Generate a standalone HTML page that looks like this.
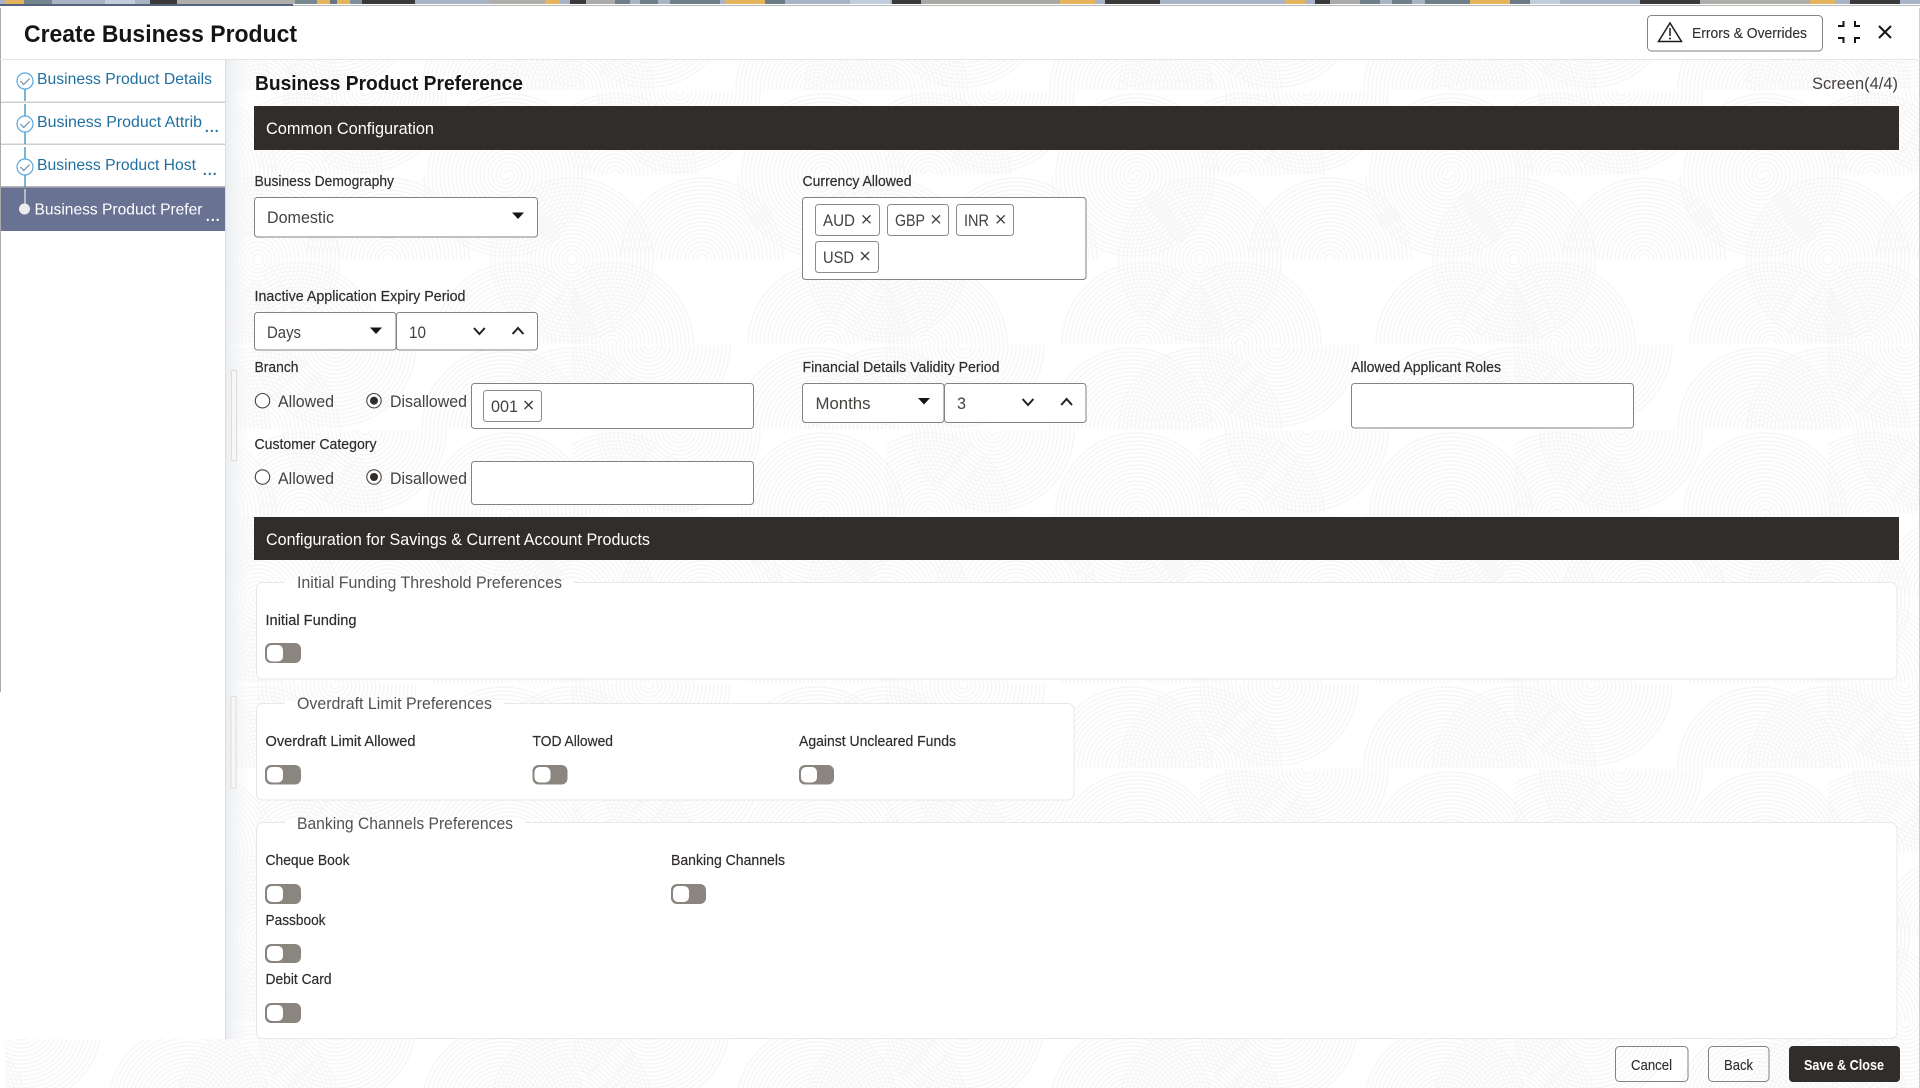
<!DOCTYPE html>
<html lang="en">
<head>
<meta charset="utf-8">
<title>Create Business Product</title>
<style>
html,body{margin:0;padding:0;background:#fff;width:1920px;height:1088px;overflow:hidden}
svg{display:block}
text{font-family:"Liberation Sans",sans-serif;white-space:pre}
.l{font-size:14.5px;fill:#2f2c2a;stroke:#2f2c2a;stroke-width:.18px}
.v{font-size:17px;fill:#45413e}
.c{font-size:16.5px;fill:#45413e}
.g{font-size:16.5px;fill:#55514e}
.s{font-size:16px;fill:#1f6f9f}
.b{font-size:15px;fill:#312d2a;stroke:#312d2a;stroke-width:.12px}
.h{font-size:17px;fill:#fff}
.box{fill:#fff;stroke:#85817d;stroke-width:1}
.chip{fill:#fff;stroke:#8f8b87;stroke-width:1}
.x{stroke:#3b3835;stroke-width:1.3;fill:none}
.chev{stroke:#222;stroke-width:2;fill:none}
.tg{fill:#8b8580}
.kn{fill:#fff}
.fs{fill:#fff;stroke:#e8e8e8;stroke-width:1}
.ck{fill:#fff;stroke:#5aa7dc;stroke-width:1.2}
.tk{fill:none;stroke:#6a93b0;stroke-width:1.2}
.ln{stroke:#1f86c1;stroke-width:1.2}
.dot{fill:#1f6f9f}
</style>
</head>
<body>
<svg xmlns="http://www.w3.org/2000/svg" width="1920" height="1088" viewBox="0 0 1920 1088">
<defs>
<g id="r" fill="none" stroke="#f6f6f6" stroke-width="1.5">
<circle r="5"/><circle r="9"/><circle r="13"/><circle r="17"/><circle r="21"/><circle r="25"/><circle r="29"/><circle r="33"/><circle r="37"/><circle r="41"/><circle r="45"/><circle r="49"/><circle r="53"/><circle r="57"/><circle r="61"/><circle r="65"/><circle r="69"/><circle r="73"/><circle r="77"/><circle r="81"/>
</g>
<pattern id="bg" width="314" height="339" patternUnits="userSpaceOnUse" patternTransform="translate(258 175)">
<svg x="0" y="0" width="314" height="84">
<use href="#r" x="0" y="84"/><use href="#r" x="314" y="84"/><use href="#r" x="130" y="84"/><use href="#r" x="247" y="0"/><use href="#r" x="-67" y="0"/>
</svg>
<svg x="0" y="85" width="314" height="84">
<use href="#r" x="40" y="84"/><use href="#r" x="257" y="84"/><use href="#r" x="-57" y="84"/><use href="#r" x="0" y="0"/><use href="#r" x="314" y="0"/>
</svg>
<svg x="0" y="170" width="314" height="84">
<use href="#r" x="0" y="84"/><use href="#r" x="314" y="84"/><use href="#r" x="245" y="84"/><use href="#r" x="-69" y="84"/><use href="#r" x="77" y="0"/>
</svg>
<svg x="0" y="255" width="314" height="84">
<use href="#r" x="251" y="84"/><use href="#r" x="-63" y="84"/><use href="#r" x="43" y="84"/><use href="#r" x="107" y="0"/>
</svg>
</pattern>
<linearGradient id="sh" x1="0" x2="1" y1="0" y2="0"><stop offset="0" stop-color="#e9ecef" stop-opacity=".9"/><stop offset="1" stop-color="#fff" stop-opacity="0"/></linearGradient>
</defs>

<!-- top strip -->
<rect x="0" y="0" width="1920" height="5" fill="#a8b4c6"/>
<g>
<rect x="5" y="0" width="19" height="4" fill="#e5b45c"/><rect x="24" y="0" width="28" height="4" fill="#74848c"/><rect x="105" y="0" width="30" height="4" fill="#c2cddc"/>
<rect x="150" y="0" width="27" height="4" fill="#3a3a3a"/><rect x="177" y="0" width="118" height="4" fill="#b0aeaa"/><rect x="295" y="0" width="22" height="4" fill="#78898f"/>
<rect x="317" y="0" width="13" height="4" fill="#e5b45c"/><rect x="330" y="0" width="7" height="4" fill="#667680"/><rect x="337" y="0" width="13" height="4" fill="#e5b45c"/><rect x="350" y="0" width="12" height="4" fill="#808f9c"/>
<rect x="362" y="0" width="53" height="4" fill="#3a3a3a"/><rect x="490" y="0" width="55" height="4" fill="#b0aeaa"/><rect x="545" y="0" width="15" height="4" fill="#e5b45c"/>
<rect x="570" y="0" width="16" height="4" fill="#3a3a3a"/><rect x="586" y="0" width="29" height="4" fill="#aaaaaa"/>
<rect x="615" y="0" width="15" height="4" fill="#6f7f88"/><rect x="640" y="0" width="18" height="4" fill="#6f7f88"/><rect x="670" y="0" width="50" height="4" fill="#6f7f88"/>
<rect x="725" y="0" width="40" height="4" fill="#e5b45c"/><rect x="765" y="0" width="20" height="4" fill="#6c7c84"/><rect x="850" y="0" width="40" height="4" fill="#c2cddc"/>
<rect x="892" y="0" width="29" height="4" fill="#3a3a3a"/><rect x="921" y="0" width="139" height="4" fill="#aba9a5"/><rect x="1060" y="0" width="35" height="4" fill="#e5b45c"/>
<rect x="1105" y="0" width="55" height="4" fill="#3a3a3a"/><rect x="1285" y="0" width="20" height="4" fill="#e5b45c"/><rect x="1315" y="0" width="15" height="4" fill="#3a3a3a"/><rect x="1330" y="0" width="30" height="4" fill="#aaaaaa"/>
<rect x="1360" y="0" width="20" height="4" fill="#6f7f88"/><rect x="1392" y="0" width="20" height="4" fill="#6f7f88"/><rect x="1425" y="0" width="45" height="4" fill="#6f7f88"/>
<rect x="1470" y="0" width="40" height="4" fill="#e5b45c"/><rect x="1510" y="0" width="20" height="4" fill="#6c7c84"/><rect x="1530" y="0" width="30" height="4" fill="#c2cddc"/>
<rect x="1640" y="0" width="60" height="4" fill="#3a3a3a"/><rect x="1700" y="0" width="110" height="4" fill="#b0aeaa"/><rect x="1810" y="0" width="25" height="4" fill="#e5b45c"/><rect x="1850" y="0" width="50" height="4" fill="#3a3a3a"/>
</g>
<rect x="0" y="4" width="1920" height="1" fill="#fff"/>
<rect x="0" y="5" width="1920" height="1" fill="#b9b9b9"/>
<rect x="0" y="4" width="293" height="2" fill="#55637f"/>

<!-- body -->
<rect x="0" y="6" width="1920" height="1082" fill="#fff"/>
<rect x="5" y="59" width="1914" height="1029" fill="url(#bg)"/>
<rect x="0" y="59" width="226" height="980" fill="#fff"/>
<rect x="226" y="60" width="30" height="979" fill="url(#sh)"/>
<rect x="0" y="8" width="1" height="684" fill="#a9a9a9"/>
<rect x="1919" y="8" width="1" height="1080" fill="#cfcfcf"/>
<rect x="0" y="59" width="1920" height="1" fill="#e6e6e6"/>
<rect x="225" y="60" width="1" height="979" fill="#d9dee5"/>

<!-- header -->
<text x="24" y="42" font-size="24" font-weight="bold" fill="#161513" textLength="273" lengthAdjust="spacingAndGlyphs">Create Business Product</text>
<rect x="1647.5" y="15.5" width="175" height="35.500" rx="4" fill="#fff" stroke="#85817d"/>
<path d="M1670 23 L1681.5 41.500 H1658.500 Z" fill="none" stroke="#1c1c1c" stroke-width="1.500"/>
<path d="M1670 28 V36" stroke="#1c1c1c" stroke-width="1.500"/><circle cx="1670" cy="38.500" r="1" fill="#1c1c1c"/>
<text x="1692" y="38" class="b" textLength="115" lengthAdjust="spacingAndGlyphs">Errors &amp; Overrides</text>
<path d="M1838 26 H1843.500 V21 M1855 21 V26 H1860 M1838 38 H1843.500 V43 M1860 38 H1855 V43" fill="none" stroke="#161513" stroke-width="2"/>
<path d="M1879 26 L1891 38 M1891 26 L1879 38" fill="none" stroke="#161513" stroke-width="2"/>

<!-- sidebar -->
<rect x="1" y="101.500" width="224" height="1.500" fill="#cfcfcf"/>
<rect x="1" y="143.500" width="224" height="1.500" fill="#cfcfcf"/>
<rect x="1" y="187" width="224" height="44" fill="#6a7293"/>
<rect x="1" y="186" width="224" height="1.500" fill="#b9b9b9"/>
<path class="ln" d="M25 89V101M25 104V116M25 132V144M25 147V159M25 175V187"/>
<path d="M25 189V204" stroke="#e8e8e8" stroke-width="1.200"/>
<circle class="ck" cx="25" cy="81" r="8"/><path class="tk" d="M20.500 81 l3.200 3.500 l6 -6"/>
<circle class="ck" cx="25" cy="124" r="8"/><path class="tk" d="M20.500 124 l3.200 3.500 l6 -6"/>
<circle class="ck" cx="25" cy="167" r="8"/><path class="tk" d="M20.500 167 l3.200 3.500 l6 -6"/>
<circle cx="24.500" cy="209" r="5.500" fill="#ececec"/>
<text x="37" y="84" class="s" textLength="175" lengthAdjust="spacingAndGlyphs">Business Product Details</text>
<text x="37" y="127" class="s" textLength="165" lengthAdjust="spacingAndGlyphs">Business Product Attrib</text>
<text x="37" y="170" class="s" textLength="159" lengthAdjust="spacingAndGlyphs">Business Product Host</text>
<text x="34.500" y="214.500" font-size="16" fill="#fff" textLength="168" lengthAdjust="spacingAndGlyphs">Business Product Prefer</text>
<text x="204" y="132" font-size="20" fill="#1f6f9f" letter-spacing="-0.6">...</text>
<text x="202" y="175" font-size="20" fill="#1f6f9f" letter-spacing="-0.6">...</text>
<text x="205" y="221" font-size="20" fill="#fff" letter-spacing="-0.6">...</text>

<!-- main head -->
<text x="255" y="90" font-size="20" font-weight="bold" fill="#161513" textLength="268" lengthAdjust="spacingAndGlyphs">Business Product Preference</text>
<text x="1812" y="89" font-size="17" fill="#45413e" textLength="86" lengthAdjust="spacingAndGlyphs">Screen(4/4)</text>
<rect x="254" y="106" width="1645" height="44" fill="#312d2a"/>
<text x="266" y="134" class="h" textLength="168" lengthAdjust="spacingAndGlyphs">Common Configuration</text>

<!-- common config -->
<text x="254.500" y="186" class="l" textLength="139.500" lengthAdjust="spacingAndGlyphs">Business Demography</text>
<rect class="box" x="254.500" y="197.500" width="283" height="39.500" rx="3"/>
<text x="267" y="223" class="v" textLength="67" lengthAdjust="spacingAndGlyphs">Domestic</text>
<path d="M512 212.500 h12 l-6 6.500z" fill="#161513"/>

<text x="802.500" y="186" class="l" textLength="109" lengthAdjust="spacingAndGlyphs">Currency Allowed</text>
<rect class="box" x="802.500" y="197.500" width="283.500" height="82" rx="3"/>
<rect class="chip" x="815.500" y="204.500" width="64" height="31" rx="3"/>
<text x="823" y="226" class="c" textLength="32" lengthAdjust="spacingAndGlyphs">AUD</text>
<path class="x" d="M862.500 215.300 l8 8 M870.500 215.300 l-8 8"/>
<rect class="chip" x="887.500" y="204.500" width="61" height="31" rx="3"/>
<text x="895" y="226" class="c" textLength="30" lengthAdjust="spacingAndGlyphs">GBP</text>
<path class="x" d="M932 215.300 l8 8 M940 215.300 l-8 8"/>
<rect class="chip" x="956.500" y="204.500" width="57" height="31" rx="3"/>
<text x="964" y="226" class="c" textLength="25" lengthAdjust="spacingAndGlyphs">INR</text>
<path class="x" d="M996.700 215.300 l8 8 M1004.700 215.300 l-8 8"/>
<rect class="chip" x="815.500" y="241.500" width="63" height="31" rx="3"/>
<text x="823" y="263" class="c" textLength="31" lengthAdjust="spacingAndGlyphs">USD</text>
<path class="x" d="M861 252 l8 8 M869 252 l-8 8"/>

<text x="254.500" y="301" class="l" textLength="211" lengthAdjust="spacingAndGlyphs">Inactive Application Expiry Period</text>
<rect class="box" x="254.500" y="312.500" width="141.500" height="37.500" rx="3"/>
<text x="267" y="338" class="v" textLength="34" lengthAdjust="spacingAndGlyphs">Days</text>
<path d="M370 327.500 h12 l-6 6.500z" fill="#161513"/>
<rect class="box" x="396.500" y="312.500" width="141" height="37.500" rx="3"/>
<text x="409" y="338" class="v" textLength="17" lengthAdjust="spacingAndGlyphs">10</text>
<path class="chev" d="M474 328 l5.400 6 l5.400 -6"/>
<path class="chev" d="M512.600 334 l5.400 -6 l5.400 6"/>

<text x="254.500" y="372" class="l" textLength="44" lengthAdjust="spacingAndGlyphs">Branch</text>
<circle cx="262.500" cy="400.700" r="7.200" fill="#fff" stroke="#45413e" stroke-width="1.100"/>
<text x="278" y="407" class="v" textLength="56" lengthAdjust="spacingAndGlyphs">Allowed</text>
<circle cx="374" cy="400.700" r="7.200" fill="#fff" stroke="#45413e" stroke-width="1.100"/><circle cx="374" cy="400.700" r="4" fill="#312d2a"/>
<text x="390" y="407" class="v" textLength="77" lengthAdjust="spacingAndGlyphs">Disallowed</text>
<rect class="box" x="471.500" y="383.500" width="282" height="45" rx="3"/>
<rect class="chip" x="483.500" y="390.500" width="58" height="31" rx="3"/>
<text x="491" y="412" class="c" textLength="27" lengthAdjust="spacingAndGlyphs">001</text>
<path class="x" d="M524.600 401 l8 8 M532.600 401 l-8 8"/>

<text x="802.500" y="372" class="l" textLength="197" lengthAdjust="spacingAndGlyphs">Financial Details Validity Period</text>
<rect class="box" x="802.500" y="383.500" width="141.500" height="39" rx="3"/>
<text x="815.500" y="409" class="v" textLength="55" lengthAdjust="spacingAndGlyphs">Months</text>
<path d="M918 398 h12 l-6 6.500z" fill="#161513"/>
<rect class="box" x="944.500" y="383.500" width="141.500" height="39" rx="3"/>
<text x="957" y="409" class="v" textLength="9" lengthAdjust="spacingAndGlyphs">3</text>
<path class="chev" d="M1022.600 399 l5.400 6 l5.400 -6"/>
<path class="chev" d="M1061.200 405 l5.400 -6 l5.400 6"/>

<text x="1351" y="372" class="l" textLength="150" lengthAdjust="spacingAndGlyphs">Allowed Applicant Roles</text>
<rect class="box" x="1351.500" y="383.500" width="282" height="44.500" rx="3"/>

<text x="254.500" y="449" class="l" textLength="122" lengthAdjust="spacingAndGlyphs">Customer Category</text>
<circle cx="262.500" cy="477" r="7.200" fill="#fff" stroke="#45413e" stroke-width="1.100"/>
<text x="278" y="484" class="v" textLength="56" lengthAdjust="spacingAndGlyphs">Allowed</text>
<circle cx="374" cy="477" r="7.200" fill="#fff" stroke="#45413e" stroke-width="1.100"/><circle cx="374" cy="477" r="4" fill="#312d2a"/>
<text x="390" y="484" class="v" textLength="77" lengthAdjust="spacingAndGlyphs">Disallowed</text>
<rect class="box" x="471.500" y="461.500" width="282" height="43" rx="3"/>

<rect x="231.500" y="370.500" width="5" height="90" fill="#f7f7f7" stroke="#dcdcdc"/>
<rect x="231" y="696.500" width="5" height="91.500" fill="#f7f7f7" stroke="#dcdcdc"/>

<!-- savings config -->
<rect x="254" y="517" width="1645" height="43" fill="#312d2a"/>
<text x="266" y="545" class="h" textLength="384" lengthAdjust="spacingAndGlyphs">Configuration for Savings &amp; Current Account Products</text>

<rect class="fs" x="256.500" y="582.500" width="1640.500" height="96.500" rx="6"/>
<rect x="285" y="580" width="289" height="5" fill="#fff"/>
<text x="297" y="588" class="g" textLength="265" lengthAdjust="spacingAndGlyphs">Initial Funding Threshold Preferences</text>
<text x="265.500" y="625" class="l" textLength="91" lengthAdjust="spacingAndGlyphs">Initial Funding</text>
<rect class="tg" x="265" y="643" width="36" height="20" rx="6"/><rect class="kn" x="267" y="645" width="16" height="16.500" rx="5"/>

<rect class="fs" x="256.500" y="703.500" width="817.500" height="96.500" rx="6"/>
<rect x="285" y="701" width="219" height="5" fill="#fff"/>
<text x="297" y="709" class="g" textLength="195" lengthAdjust="spacingAndGlyphs">Overdraft Limit Preferences</text>
<text x="265.500" y="746" class="l" textLength="150" lengthAdjust="spacingAndGlyphs">Overdraft Limit Allowed</text>
<rect class="tg" x="265" y="765" width="36" height="19.500" rx="6"/><rect class="kn" x="267" y="767" width="16" height="15.500" rx="5"/>
<text x="532.500" y="746" class="l" textLength="80.500" lengthAdjust="spacingAndGlyphs">TOD Allowed</text>
<rect class="tg" x="532.500" y="765" width="35" height="19.500" rx="6"/><rect class="kn" x="534.500" y="767" width="16" height="15.500" rx="5"/>
<text x="799" y="746" class="l" textLength="157" lengthAdjust="spacingAndGlyphs">Against Uncleared Funds</text>
<rect class="tg" x="799" y="765" width="35" height="19.500" rx="6"/><rect class="kn" x="801" y="767" width="16" height="15.500" rx="5"/>

<rect class="fs" x="256.500" y="822.500" width="1640.500" height="216" rx="6"/>
<rect x="285" y="820" width="240" height="5" fill="#fff"/>
<text x="297" y="829" class="g" textLength="216" lengthAdjust="spacingAndGlyphs">Banking Channels Preferences</text>
<text x="265.500" y="865" class="l" textLength="84" lengthAdjust="spacingAndGlyphs">Cheque Book</text>
<rect class="tg" x="265" y="884" width="36" height="20" rx="6"/><rect class="kn" x="267" y="886" width="16" height="16" rx="5"/>
<text x="671" y="865" class="l" textLength="114" lengthAdjust="spacingAndGlyphs">Banking Channels</text>
<rect class="tg" x="671" y="884" width="35" height="20" rx="6"/><rect class="kn" x="673" y="886" width="16" height="16" rx="5"/>
<text x="265.500" y="925" class="l" textLength="60" lengthAdjust="spacingAndGlyphs">Passbook</text>
<rect class="tg" x="265" y="944" width="36" height="19" rx="6"/><rect class="kn" x="267" y="946" width="16" height="15" rx="5"/>
<text x="265.500" y="984" class="l" textLength="66" lengthAdjust="spacingAndGlyphs">Debit Card</text>
<rect class="tg" x="265" y="1003" width="36" height="20" rx="6"/><rect class="kn" x="267" y="1005" width="16" height="16" rx="5"/>

<!-- footer -->
<rect x="1615.500" y="1046.500" width="72.500" height="35" rx="4" fill="none" stroke="#85817d"/>
<text x="1631" y="1070" class="b" textLength="41" lengthAdjust="spacingAndGlyphs">Cancel</text>
<rect x="1708.500" y="1046.500" width="60.500" height="35" rx="4" fill="none" stroke="#85817d"/>
<text x="1724" y="1070" class="b" textLength="29" lengthAdjust="spacingAndGlyphs">Back</text>
<rect x="1789" y="1046" width="111" height="36" rx="4" fill="#312d2a"/>
<text x="1804" y="1070" font-size="15" font-weight="bold" fill="#fff" textLength="80" lengthAdjust="spacingAndGlyphs">Save &amp; Close</text>
</svg>
</body>
</html>
